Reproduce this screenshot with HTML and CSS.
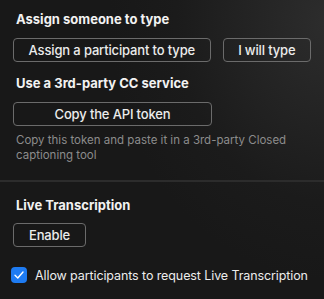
FILE: index.html
```html
<!DOCTYPE html>
<html lang="en">
<head>
  <meta charset="UTF-8">
  <title>Closed Caption</title>
  <link rel="stylesheet" href="styles.css">
</head>
<body>
  <div class="panel">
    <section class="group">
      <h3>Assign someone to type</h3>
      <div class="btn-row">
        <button class="btn btn-wide">Assign a participant to type</button>
        <button class="btn btn-self">I will type</button>
      </div>
      <h3 class="sub">Use a 3rd-party CC service</h3>
      <button class="btn btn-wide">Copy the API token</button>
      <p class="hint">Copy this token and paste it in a 3rd-party Closed captioning tool</p>
    </section>

    <hr class="divider">

    <section class="group">
      <h3>Live Transcription</h3>
      <button class="btn btn-enable">Enable</button>
      <label class="check">
        <span class="box">
          <svg width="10" height="8" viewBox="0 0 10 8"><path d="M1 4.2 L3.8 7 L9 1" fill="none" stroke="#fff" stroke-width="1.4" stroke-linecap="round" stroke-linejoin="round"/></svg>
        </span>
        Allow participants to request Live Transcription
      </label>
    </section>
  </div>
</body>
</html>
```

FILE: styles.css
```css
html, body {
  margin: 0;
  padding: 0;
}

body {
  width: 324px;
  height: 299px;
  overflow: hidden;
  font-family: Inter, "Noto Sans", sans-serif;
  color: #e6e6e6;
  background: radial-gradient(ellipse 220px 260px at 330px 20px, #2d2d2d, #1b1b1b 70%, #181818);
}

.panel {
  padding-top: 11px;
}

.group {
  padding: 0 13px;
}

h3 {
  margin: 0 0 0 3px;
  font-size: 13px;
  font-weight: 700;
  line-height: 16px;
  color: #f2f2f2;
}

.sub {
  margin-top: 13px;
}

.btn-row {
  display: flex;
  gap: 12px;
  margin: 11px 0 12px;
}

.btn {
  display: block;
  height: 24px;
  padding: 0;
  border: 1px solid #6b6b6b;
  border-radius: 4px;
  background: transparent;
  color: #ececec;
  font-family: inherit;
  font-size: 13px;
  font-weight: 500;
  letter-spacing: -0.15px;
}

.btn-wide {
  width: 199px;
}

.btn-self {
  width: 89px;
}

.sub + .btn {
  margin-top: 11px;
}

.hint {
  margin: 7px 0 0 3px;
  font-size: 11.5px;
  line-height: 15px;
  color: #8c8c8c;
}

.divider {
  margin: 17px 0 0;
  border: none;
  height: 2px;
  background: #2c2c2c;
}

.divider + .group {
  padding-top: 15px;
}

.btn-enable {
  width: 73px;
  margin-top: 10px;
}

.check {
  display: flex;
  align-items: center;
  gap: 8px;
  margin: 20px 0 0 -2px;
  font-size: 12.5px;
  letter-spacing: -0.1px;
  white-space: nowrap;
  color: #ececec;
}

.box {
  flex: none;
  display: flex;
  align-items: center;
  justify-content: center;
  width: 16px;
  height: 16px;
  border-radius: 4px;
  background: #1e7bf2;
}
```
